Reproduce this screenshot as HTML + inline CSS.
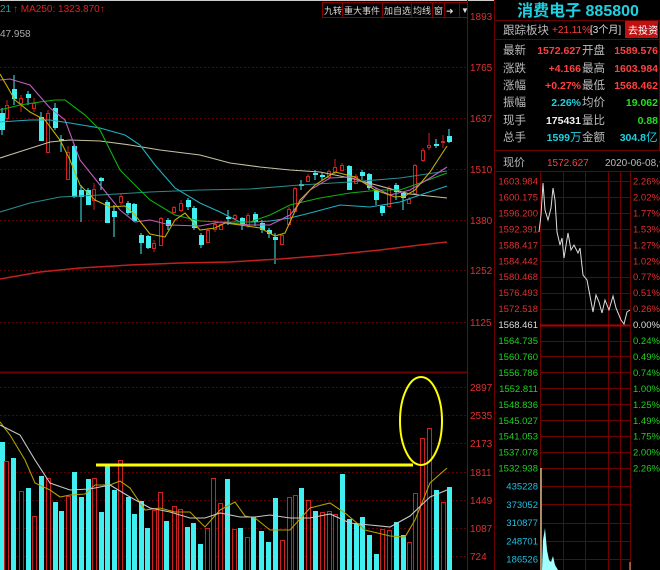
<!DOCTYPE html>
<html><head><meta charset="utf-8">
<style>
body{margin:0;background:#000;width:660px;height:570px;overflow:hidden;font-family:"Liberation Sans","Noto Sans CJK SC",sans-serif;}
svg{position:absolute;left:0;top:0}
text{font-family:"Liberation Sans","Noto Sans CJK SC",sans-serif}
</style></head><body>
<svg id="s" width="660" height="570" xmlns="http://www.w3.org/2000/svg">
<rect width="660" height="570" fill="#000"/>
<line x1="0" y1="0.5" x2="495" y2="0.5" stroke="#ccc"/>
<g stroke="#5a0000" stroke-dasharray="2,2" stroke-width="1">
<line x1="0" y1="67.5" x2="467" y2="67.5"/><line x1="0" y1="118.5" x2="467" y2="118.5"/>
<line x1="0" y1="169.5" x2="467" y2="169.5"/><line x1="0" y1="220.5" x2="467" y2="220.5"/>
<line x1="0" y1="270.5" x2="467" y2="270.5"/><line x1="0" y1="322.5" x2="467" y2="322.5"/>
<line x1="0" y1="387.5" x2="467" y2="387.5"/><line x1="0" y1="415.5" x2="467" y2="415.5"/>
<line x1="0" y1="443.5" x2="467" y2="443.5"/><line x1="0" y1="472.5" x2="467" y2="472.5"/>
<line x1="0" y1="500.5" x2="467" y2="500.5"/><line x1="0" y1="528.5" x2="467" y2="528.5"/>
<line x1="0" y1="556.5" x2="467" y2="556.5"/>
</g>
<line x1="0" y1="372.5" x2="467" y2="372.5" stroke="#6a0000" stroke-width="2"/>
<line x1="467.5" y1="0" x2="467.5" y2="570" stroke="#8a0000"/>
<g id="c"></g>
<g fill="none" stroke-width="1.1">
<polyline stroke="#c8c0a0" points="0,158 25,150 50,142 70,140 100,141 130,145 160,150 200,155 230,163 260,167 290,170 320,172 350,178 380,186 410,194 447,198"/>
<polyline stroke="#2a8a8a" points="0,212 30,203 60,197 100,195 150,192 200,190 250,189 300,185 350,182 400,178 447,171"/>
<polyline stroke="#c02020" stroke-width="1.5" points="0,279 40,272 80,268 130,265 180,263 230,262 280,259 330,255 380,250 420,245 447,242"/>
<polyline stroke="#20b0c0" points="0,122 30,120 50,120 70,123 100,128 125,135 140,145 155,165 175,188 200,203 220,212 240,222 255,222 270,221 290,218 310,213 340,205 370,207 400,202 420,195 447,186"/>
<polyline stroke="#10b010" points="0,110 20,105 40,102 55,100 65,100 85,115 100,130 120,170 150,200 175,215 200,221 220,222 250,222 270,215 290,205 320,198 350,193 380,190 400,190 420,183 447,173"/>
<polyline stroke="#c060c0" points="0,80 10,79 30,85 50,108 65,120 80,160 100,185 120,210 135,222 150,220 170,225 200,226 220,222 250,225 270,225 290,215 310,190 330,178 350,177 370,185 390,195 410,190 430,178 447,167"/>
<polyline stroke="#c0b000" points="0,74 15,100 30,112 45,120 60,140 70,160 80,185 95,200 110,207 125,206 135,215 150,234 165,237 175,220 185,213 200,230 215,228 225,223 240,225 260,228 275,236 285,233 300,200 315,185 335,172 355,177 375,190 395,197 405,196 415,190 430,172 447,146"/>
<polyline stroke="#b0a000" points="0,422 10,435 25,460 35,483 50,490 60,497 70,495 85,494 95,485 110,485 120,481 130,488 145,510 160,508 175,512 190,512 205,527 220,510 235,502 245,516 255,518 270,530 290,530 310,508 330,503 345,513 365,530 390,536 405,537 415,520 430,483 447,468"/>
<polyline stroke="#c8c8c8" points="0,425 20,435 35,460 50,483 70,490 90,489 110,485 130,497 150,508 170,512 190,518 205,518 220,513 240,517 255,517 270,515 290,518 310,518 330,514 350,523 370,525 390,527 410,516 430,497 447,490"/>
</g>
<polyline fill="none" stroke="#ffff00" stroke-width="3" points="96,465 413,465"/>
<ellipse cx="421" cy="421" rx="21" ry="44" fill="none" stroke="#ffff00" stroke-width="2"/>
<text x="0" y="12" font-size="10" fill="#20a0a0">21</text><text x="13" y="12" font-size="10" fill="#e02020">↑ MA250: 1323.870↑</text>
<text x="0" y="37" font-size="10" fill="#aaa">47.958</text>
<g font-size="9" fill="#ddd">
<rect x="322.5" y="2.5" width="145" height="15" fill="#000" stroke="#800"/>
<line x1="342.5" y1="2" x2="342.5" y2="18" stroke="#800"/><line x1="382.5" y1="2" x2="382.5" y2="18" stroke="#800"/>
<line x1="411.5" y1="2" x2="411.5" y2="18" stroke="#800"/><line x1="432.5" y1="2" x2="432.5" y2="18" stroke="#800"/>
<line x1="444.5" y1="2" x2="444.5" y2="18" stroke="#800"/><line x1="459.5" y1="2" x2="459.5" y2="18" stroke="#800"/>
<text x="324" y="14">九转</text><text x="344" y="14">重大事件</text><text x="384" y="14">加自选</text><text x="413" y="14">均线</text><text x="434" y="14">窗</text><text x="446" y="14">➜</text><text x="461" y="13" font-size="8">▼</text>
</g>
<g font-size="10" fill="#e03030">
<text x="470" y="20">1893</text><text x="470" y="71">1765</text><text x="470" y="122">1637</text><text x="470" y="173">1510</text><text x="470" y="224">1380</text><text x="470" y="274">1252</text><text x="470" y="326">1125</text>
<text x="470" y="391">2897</text><text x="470" y="419">2535</text><text x="470" y="447">2173</text><text x="470" y="476">1811</text><text x="470" y="504">1449</text><text x="470" y="532">1087</text><text x="470" y="560">724</text>
</g>
<line x1="494.5" y1="0" x2="494.5" y2="570" stroke="#6a0000"/>
<text x="578" y="16" font-size="16" fill="#20d0e0" text-anchor="middle" font-weight="bold">消费电子 885800</text>
<rect x="494.5" y="20.5" width="165" height="130" fill="none" stroke="#6a0000"/>
<line x1="495" y1="39.5" x2="660" y2="39.5" stroke="#6a0000"/>
<g font-size="11.5">
<text x="503" y="34" fill="#bbb">跟踪板块</text><text x="552" y="33" font-size="10" fill="#ff4040">+21.11%</text><text x="590" y="33" font-size="10" fill="#ddd">[3个月]</text>
<rect x="625" y="21" width="33" height="17" fill="#c01010"/><text x="628" y="34" font-size="10" fill="#fff">去投资</text>
<g fill="#bbb"><text x="503" y="54">最新</text><text x="503" y="72">涨跌</text><text x="503" y="89">涨幅</text><text x="503" y="106">振幅</text><text x="503" y="124">现手</text><text x="503" y="141">总手</text>
<text x="582" y="54">开盘</text><text x="582" y="72">最高</text><text x="582" y="89">最低</text><text x="582" y="106">均价</text><text x="582" y="124">量比</text><text x="582" y="141">金额</text></g>
<g font-size="10.5" text-anchor="end" font-weight="bold">
<text x="581" y="54" fill="#ff4040">1572.627</text><text x="581" y="72" fill="#ff4040">+4.166</text><text x="581" y="89" fill="#ff4040">+0.27%</text><text x="581" y="106" fill="#20d0e0">2.26%</text><text x="581" y="124" fill="#eee">175431</text><text x="570" y="141" fill="#20d0e0">1599</text>
<text x="658" y="54" fill="#ff4040">1589.576</text><text x="658" y="72" fill="#ff4040">1603.984</text><text x="658" y="89" fill="#ff4040">1568.462</text><text x="658" y="106" fill="#20e020">19.062</text><text x="658" y="124" fill="#20e020">0.88</text><text x="646" y="141" fill="#20d0e0">304.8</text>
</g>
<text x="570" y="141" fill="#20d0e0">万</text><text x="646" y="141" fill="#20d0e0">亿</text>
</g>
<line x1="495" y1="171.5" x2="660" y2="171.5" stroke="#6a0000"/>
<text x="503" y="166" font-size="11" fill="#bbb">现价</text><text x="547" y="166" font-size="10" fill="#ff4040">1572.627</text><text x="605" y="166" font-size="10" fill="#bbb">2020-06-08,一</text>
<g id="ig" stroke="#700000"></g>
<line x1="540" y1="325.5" x2="630" y2="325.5" stroke="#b00000" stroke-width="2"/>
<g id="il" font-size="9.5"></g>
<polyline fill="none" stroke="#ddd" stroke-width="1" points="539,232 541,215 543,183 545,210 548,220 551,208 553,188 555,200 557,232 560,245 562,238 564,258 568,233 571,250 574,245 578,253 580,248 583,275 587,280 590,296 593,312 596,295 599,302 602,313 605,300 609,310 613,296 616,308 621,320 624,324 627,312 630,310"/>
<line x1="541" y1="468" x2="541" y2="570" stroke="#c8c090" stroke-width="1.5"/>
<polygon points="542,570 543,540 545,528 547,550 549,560 551,562 553,556 555,565 558,570" fill="#a0ffff"/>
<line x1="630" y1="562" x2="630" y2="570" stroke="#c8c090"/>
</svg>
<script>
var NS="http://www.w3.org/2000/svg",c=document.getElementById('c');
function el(t,a,p){var e=document.createElementNS(NS,t);for(var k in a)e.setAttribute(k,a[k]);(p||c).appendChild(e);return e;}
var K=[[0,113,130,108,135,0],[5,105,118,100,122,1],[12,89,99,75,105,0],[19,98,103,95,112,1],[26,94,98,91,105,0],[32,103,108,98,112,1],[39,117,141,112,141,0],[46,113,152,110,152,1],[53,108,128,103,130,0],[59,139,141,135,152,0],[66,152,179,146,180,1],[72,146,197,144,198,0],[79,190,197,185,222,0],[86,190,205,188,205,0],[92,189,200,183,210,1],[99,178,181,177,190,0],[105,202,223,200,223,0],[112,211,217,205,237,0],[119,196,202,194,205,1],[126,203,213,201,215,0],[132,204,221,203,222,0],[139,235,243,233,254,0],[146,236,248,235,249,0],[152,243,248,240,252,1],[159,218,245,217,246,1],[166,220,226,218,230,0],[172,207,212,206,213,1],[179,203,210,200,212,1],[186,200,207,198,210,0],[192,208,228,206,230,0],[199,235,245,233,248,0],[206,230,242,228,243,1],[213,224,229,220,232,1],[219,224,229,222,230,1],[226,217,219,210,225,0],[233,215,218,214,222,1],[240,218,225,217,230,0],[246,215,225,213,228,1],[253,214,222,212,226,0],[260,223,230,220,233,0],[267,230,234,228,238,0],[273,237,240,233,264,0],[280,235,244,234,245,1],[287,209,224,207,225,1],[293,188,211,187,212,1],[299,184,186,180,190,0],[306,176,181,174,182,1],[313,173,175,170,180,0],[320,175,177,172,180,0],[327,171,177,170,178,1],[333,167,172,159,174,1],[340,165,170,163,171,1],[347,166,190,165,190,0],[354,176,183,174,184,1],[360,172,176,170,180,0],[367,174,188,173,190,0],[374,191,200,188,205,0],[380,206,213,205,216,0],[387,188,206,186,207,1],[394,185,192,183,200,0],[401,193,198,192,210,0],[407,199,203,197,204,1],[413,165,193,164,194,1],[421,150,160,148,162,1],[427,145,147,133,150,1],[434,144,146,139,148,0],[441,141,142,135,148,1],[447,136,142,129,143,0]];
K.forEach(function(k){var col=k[5]?'#d02020':'#40f0f0';
el('line',{x1:k[0]+2,x2:k[0]+2,y1:k[3],y2:k[4],stroke:col});
if(k[5])el('rect',{x:k[0]+0.5,y:k[1]+0.5,width:3,height:Math.max(k[2]-k[1],1),fill:'#000',stroke:col});
else el('rect',{x:k[0],y:k[1],width:5,height:Math.max(k[2]-k[1],1.5),fill:col});});
var V=[[0,442,0],[4,461,1],[11,458,0],[19,491,1],[26,488,0],[32,516,1],[39,476,0],[46,478,1],[53,502,0],[59,511,0],[66,496,1],[72,472,0],[79,497,0],[86,479,0],[92,478,1],[99,512,0],[105,466,0],[112,490,0],[118,460,1],[126,497,0],[132,514,0],[139,501,0],[145,528,0],[152,510,1],[158,492,1],[164,521,0],[172,506,1],[178,509,1],[185,527,0],[191,523,0],[198,544,0],[205,528,1],[211,478,1],[218,503,1],[225,479,0],[232,529,1],[238,528,0],[245,537,1],[251,517,0],[259,531,0],[266,542,0],[273,498,0],[280,540,1],[287,497,1],[293,495,1],[299,488,0],[306,500,1],[313,511,0],[320,512,1],[327,511,1],[333,514,1],[340,474,0],[347,519,0],[354,524,0],[360,517,0],[367,535,0],[374,554,0],[380,529,1],[387,530,1],[394,522,0],[401,535,0],[407,542,1],[413,493,1],[420,438,1],[427,428,1],[434,490,0],[441,502,1],[447,487,0]];
V.forEach(function(v){if(v[2])el('rect',{x:v[0]+0.5,y:v[1]+0.5,width:4,height:570-v[1],fill:'#000',stroke:'#d02020'});else el('rect',{x:v[0],y:v[1],width:5,height:570-v[1],fill:'#40f0f0'});});
var ig=document.getElementById('ig'),il=document.getElementById('il');
[540,563,585,608,620,630].forEach(function(x){el('line',{x1:x+.5,x2:x+.5,y1:172,y2:570},ig)});
var P=['1603.984','1600.175','1596.200','1592.391','1588.417','1584.442','1580.468','1576.493','1572.518','1568.461','1564.735','1560.760','1556.786','1552.811','1548.836','1545.027','1541.053','1537.078','1532.938'];
var Q=['2.26%','2.02%','1.77%','1.53%','1.27%','1.02%','0.77%','0.51%','0.26%','0.00%','0.24%','0.49%','0.74%','1.00%','1.25%','1.49%','1.75%','2.00%','2.26%'];
P.forEach(function(p,i){var y=181+i*15.95;var col=i<9?'#e03030':(i==9?'#ddd':'#20d020');
if(i!=9)el('line',{x1:540,x2:630,y1:Math.round(y)+.5,y2:Math.round(y)+.5},ig);
var t=el('text',{x:538,y:y+3.5,'text-anchor':'end',fill:col},il);t.textContent=p;
var u=el('text',{x:633,y:y+3.5,fill:col},il);u.textContent=Q[i];});
['435228','373052','310877','248701','186526'].forEach(function(p,i){var y=486+i*18.3;el('line',{x1:540,x2:630,y1:Math.round(y)+.5,y2:Math.round(y)+.5},ig);var t=el('text',{x:538,y:y+3.5,'text-anchor':'end',fill:'#20c0e0'},il);t.textContent=p;});
</script>
</body></html>
